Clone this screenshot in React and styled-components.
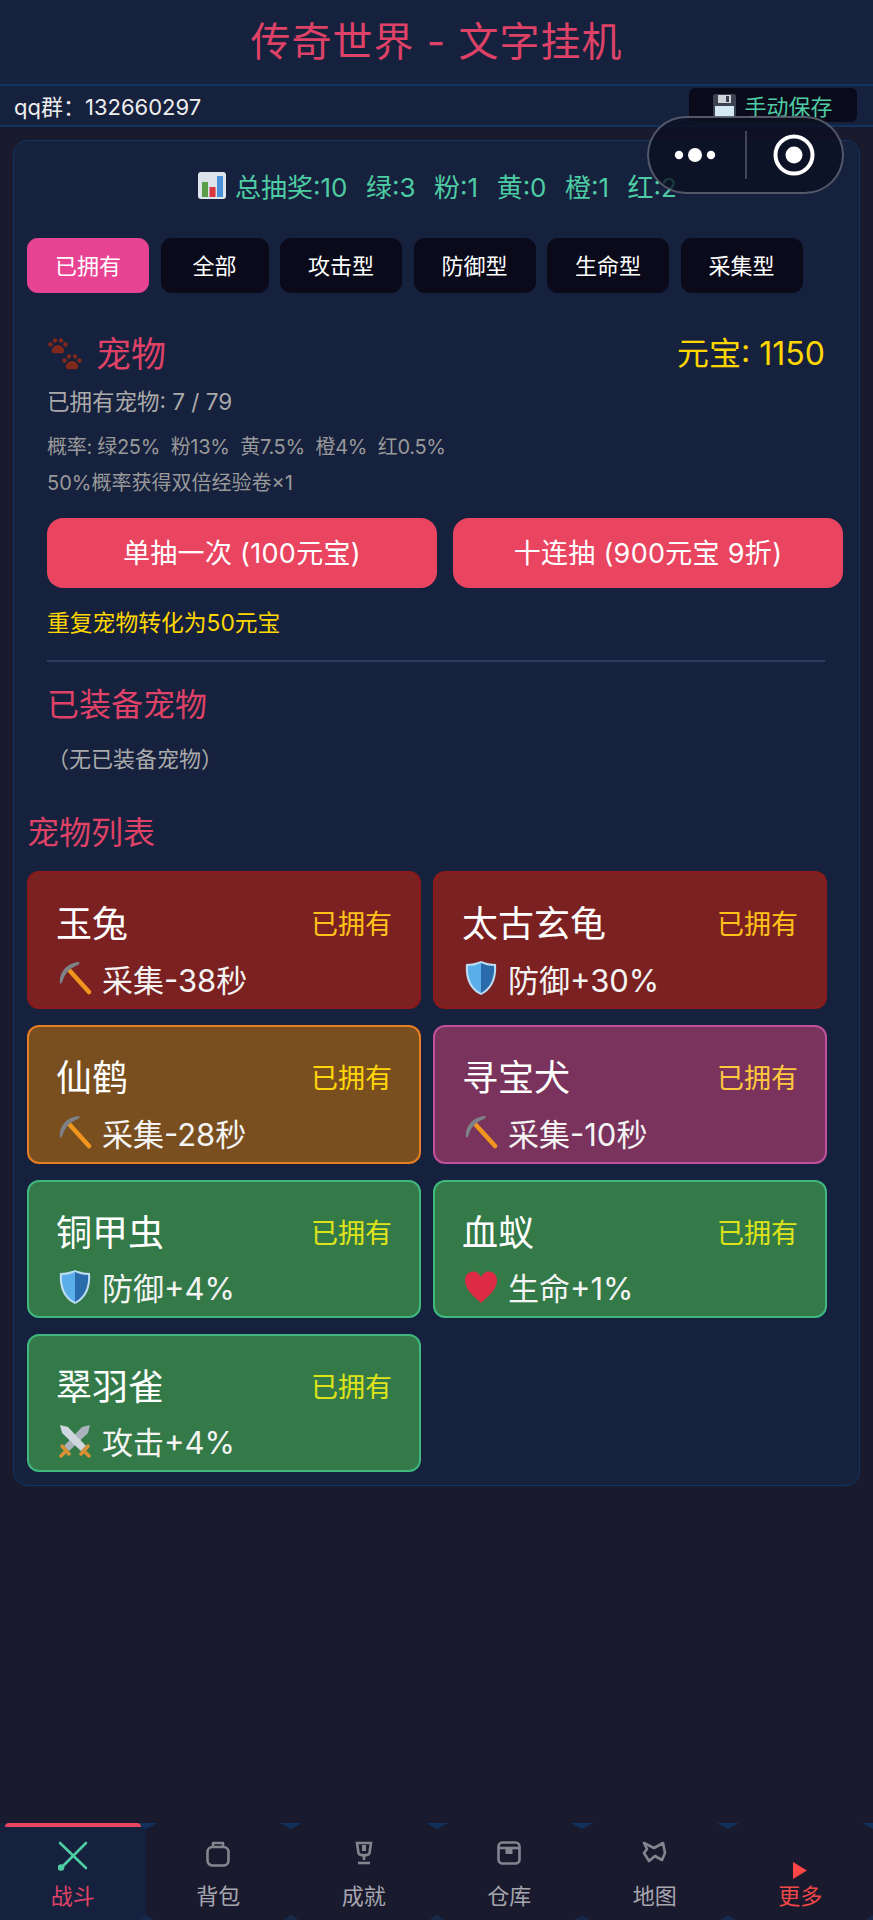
import React from 'react';
import styled, { createGlobalStyle } from 'styled-components';

const Global = createGlobalStyle`
  html, body { margin: 0; padding: 0; background: #1a1a2e; }
  * { box-sizing: border-box; }
  body { font-family: Inter, "Noto Sans CJK SC", sans-serif; color: #fff; }
`;

const Page = styled.div`
  position: relative; width: 873px; height: 1920px; overflow: hidden;
  display: flex; flex-direction: column; background: #1a1a2e;
`;
const Header = styled.header`
  height: 86px; background: #16213e; border-bottom: 2px solid #0f3460;
  display: flex; align-items: center; justify-content: center;
`;
const Title = styled.h1`
  margin: 0; font-size: 40px; font-weight: 400; line-height: 84px; color: #de4266; letter-spacing: 1px;
`;
const InfoBar = styled.div`
  height: 41px; background: #16213e; border-bottom: 2px solid #0f3460;
  padding: 0 16px 1px 14px; display: flex; align-items: center; justify-content: space-between;
`;
const QQ = styled.span` font-size: 22px; color: #eee; `;
const SaveButton = styled.button`
  width: 168px; height: 34px; border: 0; border-radius: 6px; background: #0a0a1a; color: #4ecca3;
  font: inherit; font-size: 22px; display: flex; align-items: center; justify-content: center; gap: 8px; padding: 0;
`;
const Panel = styled.main`
  margin: 13px 13px 0; width: 847px; background: #16213e; border: 1px solid #0f3460; border-radius: 14px;
  padding: 26px 32px 13px 13px;
`;
const Stats = styled.div`
  display: flex; justify-content: center; align-items: center; gap: 18.5px;
  height: 40px; font-size: 26px; color: #4ecca3; padding: 0 0 4px 21px;
`;
const StatFirst = styled.span` display: flex; align-items: center; gap: 9px; `;
const Tabs = styled.div` display: flex; gap: 11.5px; margin-top: 31px; `;
const Tab = styled.button`
  height: 55px; min-width: 108px; padding: 0 28px 4px; border: 0; border-radius: 11px; color: #fff;
  font: inherit; font-size: 22px; background: ${p => (p.$active ? '#e84393' : '#0a0a1a')};
`;
const Section = styled.section` padding: 40px 2px 0 20px; `;
const TitleRow = styled.div` display: flex; align-items: center; justify-content: space-between; height: 40px; padding-left: 1px; `;
const PetTitle = styled.h2`
  margin: 2px 0 0; display: flex; align-items: center; gap: 14px; font-size: 35px; font-weight: 400; color: #de4266; line-height: 40px;
`;
const Gold = styled.span` font-size: 32px; color: #ffd700; margin-bottom: 4px; `;
const Owned = styled.div` margin-top: 14px; font-size: 22.500px; line-height: 30px; color: #aaa; `;
const Prob = styled.div`
  font-size: 20px; line-height: 36px; color: #999; white-space: pre;
  letter-spacing: ${p => (p.$tight ? '-0.3px' : '0')};
`;
const ProbBlock = styled.div` margin-top: 12px; `;
const DrawRow = styled.div` display: flex; gap: 16px; margin: 17px -18px 0 0; `;
const DrawButton = styled.button`
  flex: 1; height: 70px; border: 0; border-radius: 16px; background: #e94560; color: #fff; font: inherit; font-size: 27px;
  letter-spacing: 0.3px; padding: 0 0 4px;
`;
const Note = styled.div` margin-top: 20px; font-size: 22.800px; line-height: 30px; color: #ffd700; `;
const Divider = styled.hr` margin: 22px 0 0; border: 0; height: 2px; background: #2f3b5c; `;
const Heading = styled.h3`
  margin: ${p => p.$flush ? '37px 0 0' : '21px 0 0'}; font-size: 32px; font-weight: 400; line-height: 44px; color: #de4266;
`;
const Empty = styled.div` margin-top: 17px; font-size: 22px; line-height: 30px; color: #aaa; `;
const Grid = styled.div`
  display: grid; grid-template-columns: 394px 394px; column-gap: 12px; row-gap: 16px; margin-top: 16px;
  grid-auto-rows: 138.33px;
`;
const rarity = {
  red: { bg: '#7b2121', bd: '#8b1a1a', st: '#ffc21a' },
  orange: { bg: '#7a4f20', bd: '#e67e22', st: '#ffd60a' },
  pink: { bg: '#79335c', bd: '#c0509c', st: '#ffc83d' },
  green: { bg: '#337a48', bd: '#3fb87f', st: '#dfe31a' },
};
const Card = styled.article`
  border: 2px solid ${p => rarity[p.$r].bd}; background: ${p => rarity[p.$r].bg}; border-radius: 12px;
  padding: 26px 27px 0 27px;
`;
const CardTop = styled.div` display: flex; align-items: center; justify-content: space-between; height: 44px; `;
const Name = styled.span` font-size: 36px; color: #fff; `;
const Status = styled.span` font-size: 27px; margin-top: 3px; color: ${p => rarity[p.$r].st}; `;
const Effect = styled.div`
  margin-top: 13px; padding-left: 2px; height: 44px; display: flex; align-items: center; gap: 10px; font-size: 31px; color: #f4f4f4;
`;
const Nav = styled.nav` margin-top: auto; height: 97px; display: flex; `;
const NavItem = styled.div`
  position: relative; flex: 1; display: flex; flex-direction: column; align-items: center;
  padding-top: 17px; background: ${p => (p.$active ? '#16213e' : 'transparent')};
  &::after {
    content: ''; position: absolute; top: 0; right: -11px; z-index: 1;
    border-left: 11px solid transparent; border-right: 11px solid transparent; border-top: 6px solid #12305c;
  }
  &::before {
    content: ''; position: absolute; bottom: 0; right: -8px; z-index: 1;
    border-left: 8px solid transparent; border-right: 8px solid transparent; border-bottom: 5px solid #17284a;
  }
`;
const ActiveBar = styled.span`
  position: absolute; top: 0; left: 5px; right: 5px; height: 4px; background: #e94560; border-radius: 6px 6px 0 0; z-index: 2;
`;
const NavIcon = styled.div`
  height: 41px; display: flex; justify-content: center; align-items: ${p => (p.$low ? 'flex-end' : 'flex-start')};
  padding-top: ${p => (p.$low ? '0' : '1px')}; padding-bottom: ${p => (p.$low ? '2px' : '0')};
`;
const NavLabel = styled.span` font-size: 22px; line-height: 30px; color: ${p => p.$c || '#a6a6ae'}; `;
const Capsule = styled.div`
  position: absolute; left: 647px; top: 116px; width: 197px; height: 78px; border-radius: 39px;
  border: 2px solid rgba(140,145,160,.55); background: rgba(12,16,32,.78);
  display: flex; align-items: center;
`;
const CapsuleSide = styled.div` flex: 1; display: flex; align-items: center; justify-content: center; `;
const CapsuleRule = styled.span` width: 2px; height: 48px; background: rgba(255,255,255,.22); `;

const BarChart = () => (
  <svg width="28" height="27" viewBox="0 0 28 27">
    <rect width="28" height="27" rx="3" fill="#dde4ec" />
    <rect x="4" y="10" width="6" height="15" fill="#5a9e4a" />
    <rect x="11.5" y="15" width="6" height="10" fill="#d8353f" />
    <rect x="19" y="4" width="6" height="21" fill="#4a90d9" />
  </svg>
);
const Floppy = () => (
  <svg width="23" height="23" viewBox="0 0 23 23">
    <rect width="23" height="23" rx="2" fill="#3d4250" />
    <rect x="5" y="1" width="13" height="8" fill="#cfd4da" />
    <rect x="13" y="2" width="3" height="6" fill="#3d4250" />
    <rect x="2" y="12" width="19" height="11" fill="#d5e8f6" />
  </svg>
);
const Paw = () => (
  <svg width="34" height="34" viewBox="0 0 34 34" fill="#80291a">
    <g>
      <path d="M10 8 C14 8 17 12 16 15 C15 17 12 16 10 16 C8 16 5 17 4 15 C3 12 6 8 10 8 Z" />
      <circle cx="2.500" cy="7.500" r="2.200" /><circle cx="7" cy="3.500" r="2.200" /><circle cx="13" cy="3.500" r="2.200" /><circle cx="17.500" cy="7.500" r="2.200" />
    </g>
    <g transform="translate(14 16)">
      <path d="M10 8 C14 8 17 12 16 15 C15 17 12 16 10 16 C8 16 5 17 4 15 C3 12 6 8 10 8 Z" />
      <circle cx="2.500" cy="7.500" r="2.200" /><circle cx="7" cy="3.500" r="2.200" /><circle cx="13" cy="3.500" r="2.200" /><circle cx="17.500" cy="7.500" r="2.200" />
    </g>
  </svg>
);
const Pick = () => (
  <svg width="34" height="34" viewBox="0 0 34 34">
    <path d="M12 10 L31 31" stroke="#f0961e" strokeWidth="4.500" strokeLinecap="round" />
    <path d="M2 22 C1 12 8 2 21 1 C22 1 22 3 20 4 C12 7 7 12 5 19 C4 22 2 24 2 22 Z" fill="#7d8288" />
  </svg>
);
const Shield = () => (
  <svg width="34" height="34" viewBox="0 0 34 34">
    <path d="M17 0 C22 2 27 3 32 3 C33 15 30 28 17 34 C4 28 1 15 2 3 C7 3 12 2 17 0 Z" fill="#bcdcf2" />
    <path d="M17 2 L17 32 C7 27 3 15 4 5 C9 5 13 4 17 2 Z" fill="#5aaeea" />
    <path d="M17 2 L17 32 C27 27 31 15 30 5 C25 5 21 4 17 2 Z" fill="#2a6cab" />
  </svg>
);
const Heart = () => (
  <svg width="34" height="34" viewBox="0 0 34 34">
    <path d="M17 33 C8 25 1 19 1 10 C1 5 5 1.500 9 1.500 C13 1.500 15.500 4 17 7 C18.500 4 21 1.500 25 1.500 C29 1.500 33 5 33 10 C33 19 26 25 17 33 Z" fill="#dd2b45" />
  </svg>
);
const Swords = () => (
  <svg width="34" height="34" viewBox="0 0 34 34">
    <path d="M32 1 L24 3 L6 22 L11 27 L30 9 Z" fill="#aab2bb" />
    <path d="M2 1 L10 3 L28 22 L23 27 L4 9 Z" fill="#cfd6dd" />
    <path d="M4 22 L11 30 M3 32 L8 27" stroke="#d99134" strokeWidth="3.500" strokeLinecap="round" />
    <path d="M30 22 L23 30 M31 32 L26 27" stroke="#d99134" strokeWidth="3.500" strokeLinecap="round" />
  </svg>
);
const icons = { pick: Pick, shield: Shield, heart: Heart, swords: Swords };

const BattleIcon = () => (
  <svg width="30" height="30" viewBox="0 0 30 30" fill="none" stroke="#4ecca3" strokeWidth="2.600" strokeLinecap="round">
    <path d="M2 2 L28 27" /><path d="M28 2 L3 27" /><circle cx="3" cy="26.500" r="2" fill="#4ecca3" />
  </svg>
);
const BagIcon = () => (
  <svg width="24" height="26" viewBox="0 0 24 26" fill="none" stroke="#85858f" strokeWidth="2.600" strokeLinejoin="round">
    <rect x="1.500" y="6" width="21" height="18.500" rx="5" /><path d="M7 6 V2 H17 V6" />
  </svg>
);
const CupIcon = () => (
  <svg width="18" height="24" viewBox="0 0 18 24" fill="none" stroke="#85858f" strokeWidth="2.600">
    <path d="M2 2 H16 L14.500 12 C14 15 4 15 3.500 12 Z" /><path d="M9 14 V19" /><path d="M3 22 H15" />
    <rect x="7" y="4" width="4" height="6" fill="#85858f" stroke="none" />
  </svg>
);
const BoxIcon = () => (
  <svg width="24" height="24" viewBox="0 0 24 24" fill="none" stroke="#85858f" strokeWidth="2.600">
    <rect x="1.500" y="1.500" width="21" height="21" rx="4" /><path d="M2 7 H22" />
    <rect x="8.500" y="8" width="7" height="5" fill="#85858f" stroke="none" />
  </svg>
);
const MapIcon = () => (
  <svg width="25" height="22" viewBox="0 0 25 22" fill="none" stroke="#85858f" strokeWidth="2.600" strokeLinejoin="round">
    <path d="M2 2 L12 7 L21 2 L23 12 L20 19 L13 15 L7 20 L2 12 L5 8 Z" />
  </svg>
);
const MoreIcon = () => (
  <svg width="14" height="17" viewBox="0 0 14 17"><path d="M0 0 L14 8.500 L0 17 Z" fill="#ff4646" /></svg>
);

const pets = [
  ['玉兔', 'red', 'pick', '采集-38秒'],
  ['太古玄龟', 'red', 'shield', '防御+30%'],
  ['仙鹤', 'orange', 'pick', '采集-28秒'],
  ['寻宝犬', 'pink', 'pick', '采集-10秒'],
  ['铜甲虫', 'green', 'shield', '防御+4%'],
  ['血蚁', 'green', 'heart', '生命+1%'],
  ['翠羽雀', 'green', 'swords', '攻击+4%'],
];
const tabs = ['已拥有', '全部', '攻击型', '防御型', '生命型', '采集型'];
const nav = [
  ['战斗', BattleIcon, '#e04468'], ['背包', BagIcon], ['成就', CupIcon], ['仓库', BoxIcon], ['地图', MapIcon], ['更多', MoreIcon, '#f04848'],
];

export default function App() {
  return (
    <Page>
      <Global />
      <Header><Title>传奇世界 - 文字挂机</Title></Header>
      <InfoBar>
        <QQ>qq群：132660297</QQ>
        <SaveButton><Floppy />手动保存</SaveButton>
      </InfoBar>
      <Panel>
        <Stats>
          <StatFirst><BarChart />总抽奖:10</StatFirst>
          <span>绿:3</span><span>粉:1</span><span>黄:0</span><span>橙:1</span><span>红:2</span>
        </Stats>
        <Tabs>{tabs.map((t, i) => <Tab key={t} $active={i === 0}>{t}</Tab>)}</Tabs>
        <Section>
          <TitleRow>
            <PetTitle><Paw />宠物</PetTitle>
            <Gold>元宝: 1150</Gold>
          </TitleRow>
          <Owned>已拥有宠物: 7 / 79</Owned>
          <ProbBlock>
            <Prob $tight>概率: 绿25%  粉13%  黄7.5%  橙4%  红0.5%</Prob>
            <Prob>50%概率获得双倍经验卷×1</Prob>
          </ProbBlock>
          <DrawRow>
            <DrawButton>单抽一次 (100元宝)</DrawButton>
            <DrawButton>十连抽 (900元宝 9折)</DrawButton>
          </DrawRow>
          <Note>重复宠物转化为50元宝</Note>
          <Divider />
          <Heading>已装备宠物</Heading>
          <Empty>（无已装备宠物）</Empty>
        </Section>
        <Heading $flush>宠物列表</Heading>
        <Grid>
          {pets.map(([name, r, icon, fx]) => {
            const I = icons[icon];
            return (
              <Card key={name} $r={r}>
                <CardTop><Name>{name}</Name><Status $r={r}>已拥有</Status></CardTop>
                <Effect><I />{fx}</Effect>
              </Card>
            );
          })}
        </Grid>
      </Panel>
      <Nav>
        {nav.map(([label, I, c], i) => (
          <NavItem key={label} $active={i === 0}>
            {i === 0 && <ActiveBar />}
            <NavIcon $low={i === 5}><I /></NavIcon>
            <NavLabel $c={c}>{label}</NavLabel>
          </NavItem>
        ))}
      </Nav>
      <Capsule>
        <CapsuleSide>
          <svg width="48" height="16" viewBox="0 0 48 16" fill="#fff">
            <circle cx="6" cy="8" r="4.200" /><circle cx="22" cy="8" r="7" /><circle cx="38" cy="8" r="4.200" />
          </svg>
        </CapsuleSide>
        <CapsuleRule />
        <CapsuleSide>
          <svg width="42" height="42" viewBox="0 0 42 42">
            <circle cx="21" cy="21" r="18.500" fill="none" stroke="#fff" strokeWidth="4" /><circle cx="21" cy="21" r="8.500" fill="#fff" />
          </svg>
        </CapsuleSide>
      </Capsule>
    </Page>
  );
}
